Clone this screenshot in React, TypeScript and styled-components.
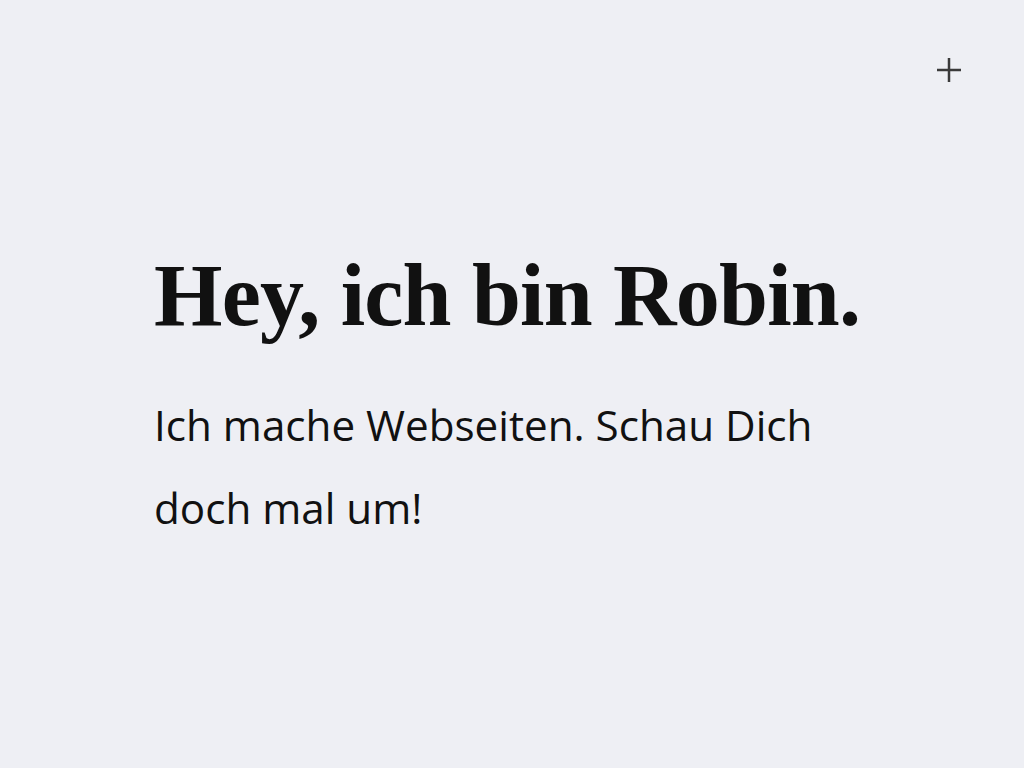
import React from "react";
import styled, { createGlobalStyle } from "styled-components";

const Global = createGlobalStyle`
  html, body { margin: 0; padding: 0; background: #eeeff4; }
  body { font-family: "Open Sans", sans-serif; color: #111; }
`;

const Page = styled.div`
  min-height: 768px;
  display: flex;
  flex-direction: column;
  position: relative;
`;

const Header = styled.header`
  display: flex;
  justify-content: flex-end;
  padding: 57px 62px 0 0;
`;

const MenuButton = styled.button`
  width: 26px;
  height: 26px;
  padding: 0;
  border: none;
  background: transparent;
  display: flex;
  align-items: center;
  justify-content: center;
  color: #3a3a3a;
  cursor: pointer;
`;

const Hero = styled.main`
  padding: 169px 0 0 154px;
`;

const Title = styled.h1`
  margin: 0;
  font-family: "Liberation Serif", serif;
  font-weight: 700;
  font-size: 88px;
  letter-spacing: -0.8px;
  line-height: 1;
  color: #111;
`;

const Lead = styled.p`
  margin: 43px 0 0;
  max-width: 680px;
  font-family: "Open Sans", sans-serif;
  font-size: 42.2px;
  line-height: 83px;
  color: #111;
`;

export default function App() {
  return (
    <>
      <Global />
      <Page>
        <Header>
          <MenuButton aria-label="Menü">
            <svg width="26" height="26" viewBox="0 0 26 26">
              <path d="M13 1v24M1 13h24" stroke="currentColor" strokeWidth="2.5" />
            </svg>
          </MenuButton>
        </Header>
        <Hero>
          <Title>Hey, ich bin Robin.</Title>
          <Lead>Ich mache Webseiten. Schau Dich doch mal um!</Lead>
        </Hero>
      </Page>
    </>
  );
}
